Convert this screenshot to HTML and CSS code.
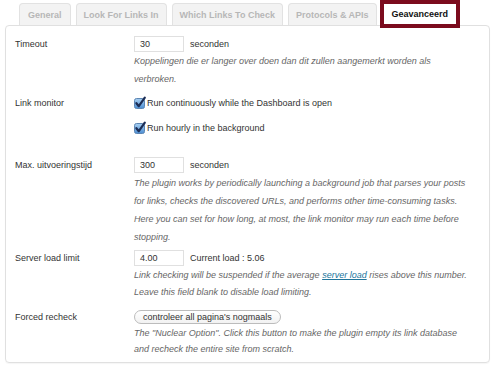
FILE: index.html
```html
<!DOCTYPE html>
<html>
<head>
<meta charset="utf-8">
<link rel="stylesheet" href="styles.css">
</head>
<body>
<div class="tabs">
  <div class="tab first">General</div>
  <div class="tab">Look For Links In</div>
  <div class="tab">Which Links To Check</div>
  <div class="tab">Protocols &amp; APIs</div>
  <div class="tab active">Geavanceerd</div>
</div>
<div class="panel">
  <div class="row r-timeout">
    <div class="label">Timeout</div>
    <div class="value">
      <div class="line"><span class="input">30</span><span class="unit">seconden</span></div>
      <div class="desc">Koppelingen die er langer over doen dan dit zullen aangemerkt worden als<br>verbroken.</div>
    </div>
  </div>
  <div class="row r-monitor">
    <div class="label">Link monitor</div>
    <div class="value">
      <div class="check"><svg class="cb" width="12" height="12" viewBox="0 0 12 12"><defs><linearGradient id="g1" x1="0" y1="0" x2="0" y2="1"><stop offset="0" stop-color="#a9d0f2"/><stop offset="1" stop-color="#4c8ed3"/></linearGradient></defs><rect x="0.5" y="1.5" width="10" height="10" rx="2" fill="url(#g1)" stroke="#5d86b3"/><path d="M2.4 6.2 L4.8 9.2 L10.8 0.6" fill="none" stroke="#1c2d55" stroke-width="2.2" stroke-linecap="round" stroke-linejoin="round"/></svg>Run continuously while the Dashboard is open</div>
      <div class="check second"><svg class="cb" width="12" height="12" viewBox="0 0 12 12"><defs><linearGradient id="g2" x1="0" y1="0" x2="0" y2="1"><stop offset="0" stop-color="#a9d0f2"/><stop offset="1" stop-color="#4c8ed3"/></linearGradient></defs><rect x="0.5" y="1.5" width="10" height="10" rx="2" fill="url(#g2)" stroke="#5d86b3"/><path d="M2.4 6.2 L4.8 9.2 L10.8 0.6" fill="none" stroke="#1c2d55" stroke-width="2.2" stroke-linecap="round" stroke-linejoin="round"/></svg>Run hourly in the background</div>
    </div>
  </div>
  <div class="row r-max">
    <div class="label">Max. uitvoeringstijd</div>
    <div class="value">
      <div class="line"><span class="input">300</span><span class="unit">seconden</span></div>
      <div class="desc lh18">The plugin works by periodically launching a background job that parses your posts<br>for links, checks the discovered URLs, and performs other time-consuming tasks.<br>Here you can set for how long, at most, the link monitor may run each time before<br>stopping.</div>
    </div>
  </div>
  <div class="row r-server">
    <div class="label">Server load limit</div>
    <div class="value">
      <div class="line"><span class="input">4.00</span><span class="unit">Current load : 5.06</span></div>
      <div class="desc lh17">Link checking will be suspended if the average <a class="link" href="#">server load</a> rises above this number.<br>Leave this field blank to disable load limiting.</div>
    </div>
  </div>
  <div class="row r-forced">
    <div class="label">Forced recheck</div>
    <div class="value">
      <div class="line short"><span class="button">controleer all pagina's nogmaals</span></div>
      <div class="desc lh16">The "Nuclear Option". Click this button to make the plugin empty its link database<br>and recheck the entire site from scratch.</div>
    </div>
  </div>
</div>
</body>
</html>
```

FILE: styles.css
```css
html, body {
  margin: 0;
  padding: 0;
  background: #ffffff;
}
body {
  font-family: "Liberation Sans", Arial, sans-serif;
  font-size: 9px;
  color: #333333;
  width: 495px;
  height: 367px;
  overflow: hidden;
}
.tabs {
  display: flex;
  align-items: flex-end;
  height: 25px;
  padding-left: 19px;
  gap: 5px;
}
.tab {
  height: 22px;
  line-height: 22px;
  padding: 0 7px;
  border: 1px solid #e2e2e2;
  border-bottom: none;
  border-radius: 4px 4px 0 0;
  background: #f3f3f3;
  color: #b7b7b7;
  font-weight: bold;
  font-size: 9px;
  box-sizing: border-box;
}
.tab.first {
  padding: 0 8px;
}
.tab.active {
  position: relative;
  z-index: 2;
  height: 28px;
  line-height: 20px;
  margin-bottom: -3px;
  margin-left: -2px;
  border: 4px solid #7b0b1d;
  border-radius: 0;
  background: #ffffff;
  color: #111111;
  padding: 0 8px;
}
.panel {
  margin: 0 5px;
  border: 1px solid #e0e0e0;
  border-radius: 4px;
  padding: 9px 9px 0 9px;
  height: 327px;
  box-shadow: 0 1px 1px rgba(0,0,0,0.04);
}
.row {
  display: grid;
  grid-template-columns: 119px 1fr;
}
.label {
  line-height: 18px;
  color: #333333;
}
.line {
  display: flex;
  align-items: center;
  height: 18px;
}
.line.short {
  height: 16px;
}
.r-forced .label {
  line-height: 16px;
}
.input {
  display: inline-block;
  box-sizing: border-box;
  width: 50px;
  height: 16px;
  line-height: 15px;
  border: 1px solid #e0e0e0;
  padding-left: 5px;
  color: #333333;
  background: #fff;
}
.unit {
  margin-left: 6px;
  color: #333333;
}
.desc {
  font-style: italic;
  color: #666666;
  line-height: 17.5px;
}
.desc.lh18 { line-height: 18px; }
.desc.lh17 { line-height: 17px; }
.desc.lh16 { line-height: 16px; }
.link {
  color: #21759b;
  text-decoration: underline;
}
.check {
  display: flex;
  align-items: center;
  height: 18px;
  line-height: 18px;
}
.check.second {
  margin-top: 7px;
}
.cb {
  margin-right: 1px;
  overflow: visible;
}
.button {
  display: inline-block;
  box-sizing: border-box;
  height: 14px;
  line-height: 12px;
  padding: 0 8px;
  border: 1px solid #bcbcbc;
  border-radius: 8px;
  background: linear-gradient(#ffffff, #f2f2f2);
  color: #333333;
}
.r-monitor { margin-top: 6px; }
.r-max { margin-top: 19px; }
.r-server { margin-top: 3px; }
.r-forced { margin-top: 8px; }
```
